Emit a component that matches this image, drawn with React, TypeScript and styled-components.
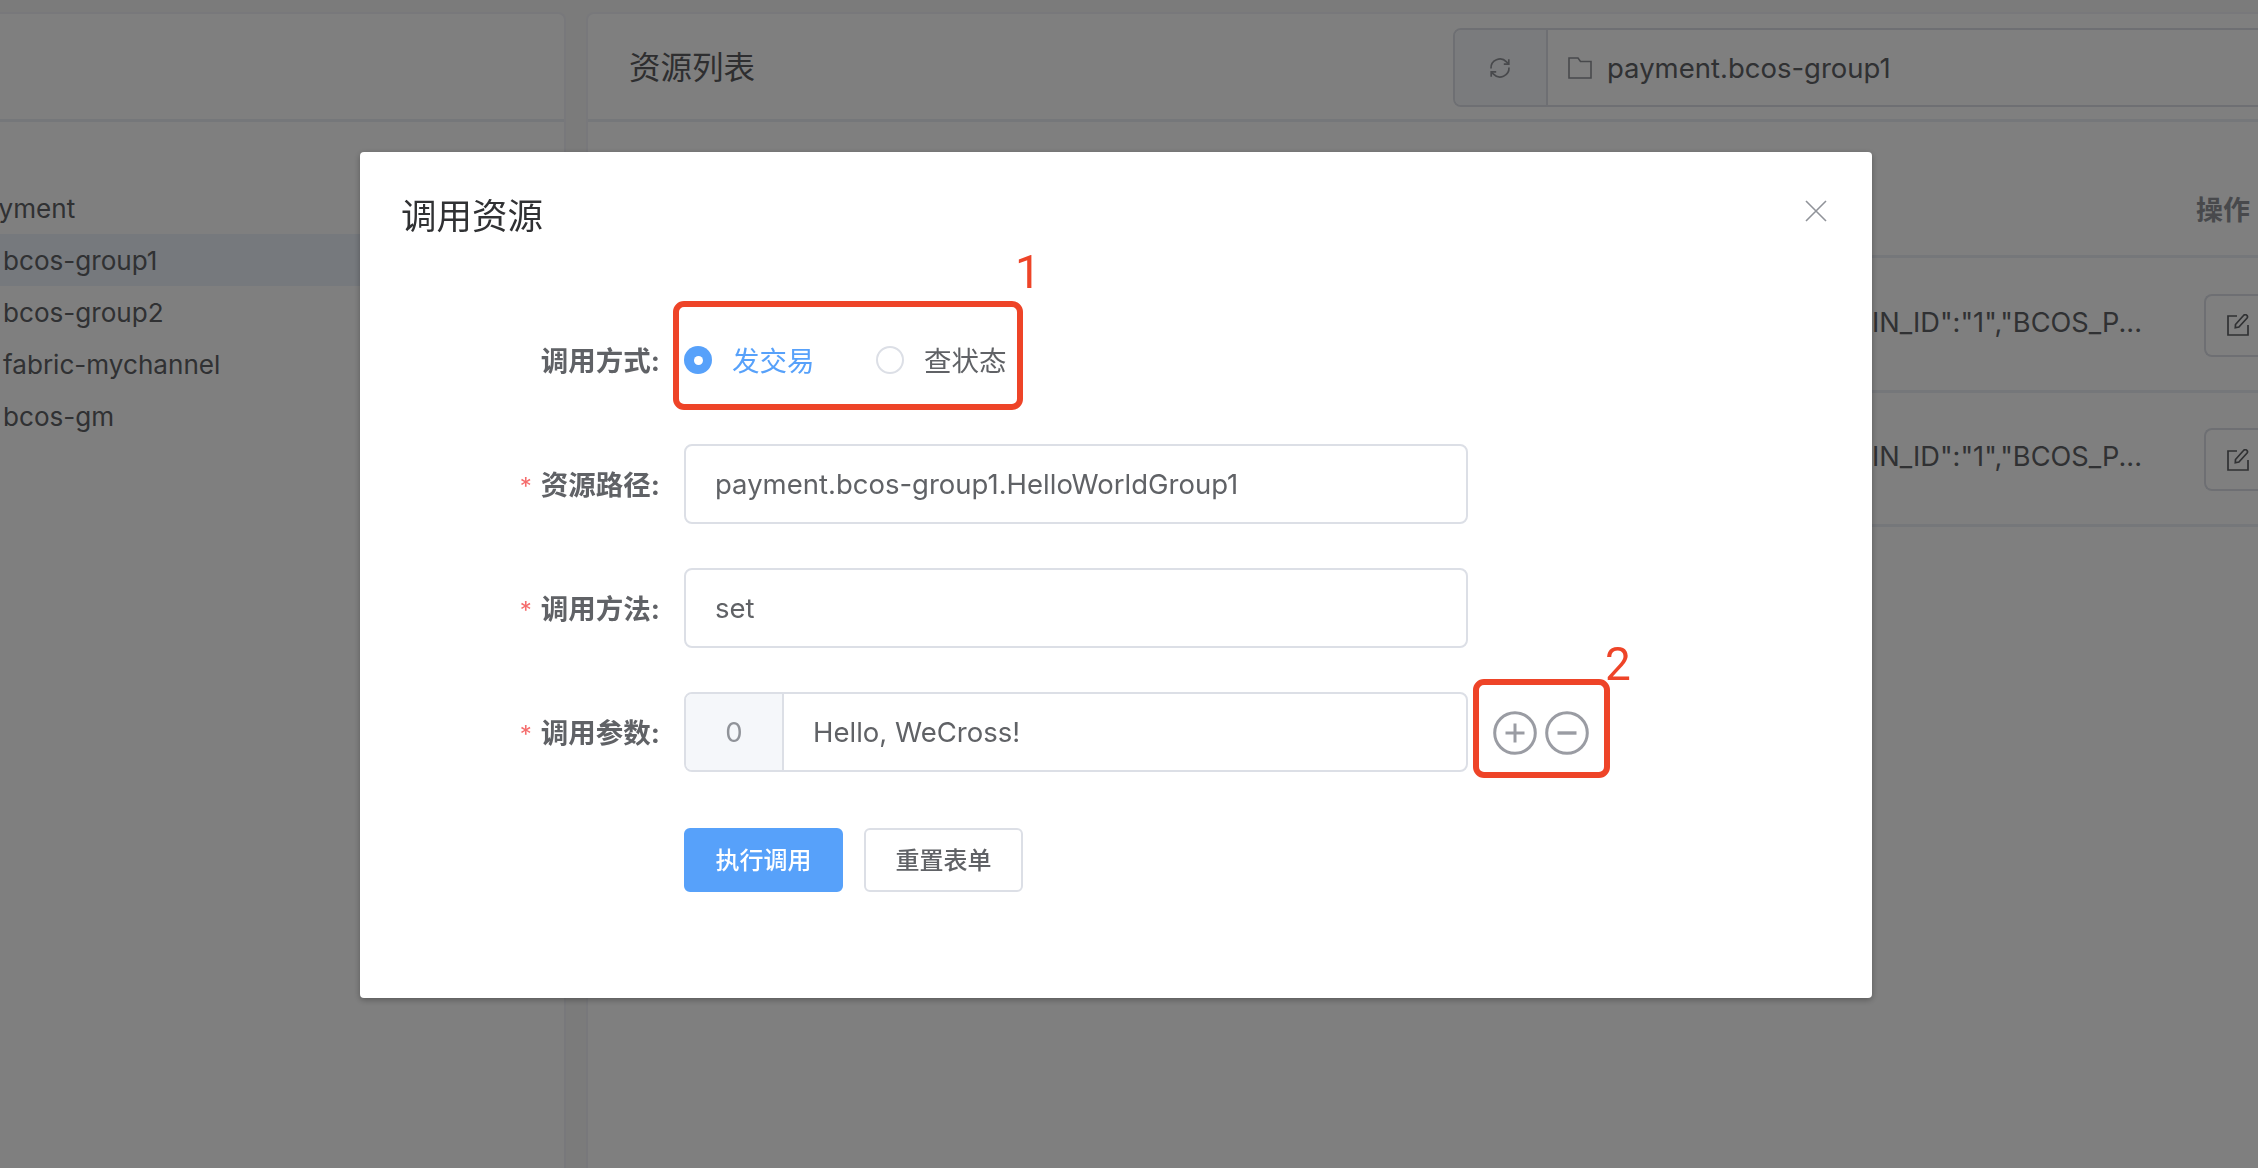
import React from "react";
import styled, { createGlobalStyle } from "styled-components";

const Global = createGlobalStyle`
  html, body { margin: 0; padding: 0; width: 2258px; height: 1168px; overflow: hidden; background: #f6f6f6; }
  body { font-family: Inter, "Noto Sans CJK SC", sans-serif; color: #606266; }
  * { box-sizing: border-box; }
`;

const Page = styled.div`
  width: 2258px; height: 1168px; overflow: hidden;
  display: grid; grid-template-columns: 566px 1701px; column-gap: 20px;
  padding-top: 12px;
`;
const Panel = styled.section`
  background: #fff; border: solid #f0f1f6; border-width: 2px 2px 0 2px; border-radius: 8px 8px 0 0;
  height: 1156px;
`;
const LeftPanel = styled(Panel)`
  border-left: 0; border-radius: 0 8px 0 0;
`;
const PanelHead = styled.header`
  height: 108px; border-bottom: 3px solid #ebeef5;
  display: flex; align-items: center;
`;
const TreeList = styled.ul`
  list-style: none; margin: 0; padding: 60px 0 0 0;
`;
const TreeRow = styled.li<{ $active?: boolean; $root?: boolean }>`
  height: 52px; display: flex; align-items: center;
  padding-left: 3px; overflow: hidden; white-space: nowrap;
  font-size: 26.1px; color: #606266;
  background: ${p => (p.$active ? "#ecf2fa" : "transparent")};
  ${p => (p.$root ? "text-indent: -35px;" : "")}
`;
const ListTitle = styled.h2`
  margin: -4px 0 0 41px; font-size: 31.5px; font-weight: 400; color: #5c5d60; flex: 0 0 auto;
`;
const PathGroup = styled.div`
  margin-left: 698px; margin-top: 2px; width: 900px; height: 79px;
  display: flex; border: 2px solid #dcdfe6; border-radius: 8px; overflow: hidden;
`;
const RefreshCell = styled.div`
  width: 93px; background: #f5f7fa; border-right: 2px solid #dcdfe6;
  display: flex; align-items: center; justify-content: center; color: #909399; padding-right: 2px;
`;
const PathCell = styled.div`
  flex: 1; display: flex; align-items: center; padding-left: 20px; gap: 15px;
  font-size: 27.5px; color: #606266;
`;
const TableHead = styled.div`
  display: grid; grid-template-columns: 1fr 81px; height: 136px;
  border-bottom: 3px solid #ebeef5; align-items: center;
`;
const OpTitle = styled.div`
  font-weight: 700; font-size: 27px; color: #909399; margin-left: -8px; white-space: nowrap; padding-top: 40px;
`;
const TableRow = styled.div`
  display: grid; grid-template-columns: 1fr 81px; height: 134.5px;
  border-bottom: 3px solid #ebeef5; align-items: center;
`;
const CellText = styled.div`
  text-align: right; padding-right: 62px; font-size: 27.2px; color: #606266; white-space: nowrap; margin-top: -3px;
`;
const EditBtn = styled.div`
  width: 81px; height: 63px; border: 2px solid #dcdfe6; border-right: 0; border-radius: 8px 0 0 8px;
  display: flex; align-items: center; padding-left: 21px; color: #606266; margin-top: 3px;
`;

const Overlay = styled.div`
  position: fixed; inset: 0; background: rgba(0,0,0,.5);
  padding: 152px 0 0 360px;
`;
const Modal = styled.div`
  position: relative; width: 1512px; height: 846px; background: #fff; border-radius: 4px;
  box-shadow: 0 2px 6px rgba(0,0,0,.3); padding-top: 42px;
`;
const ModalTitle = styled.h1`
  margin: 0 0 0 41px; height: 44px; line-height: 46px; font-size: 35.5px; font-weight: 400; color: #303133;
`;
const CloseBtn = styled.button`
  position: absolute; right: 44px; top: 47px; width: 24px; height: 24px; padding: 0; border: 0; background: none; color: #909399;
  display: flex;
`;
const Form = styled.form`
  margin-top: 82px; display: flex; flex-direction: column; gap: 44px;
`;
const Row = styled.div`
  display: grid; grid-template-columns: 300px 784px; column-gap: 24px; height: 80px; align-items: center;
`;
const Label = styled.label`
  text-align: right; font-size: 27.5px; font-weight: 700; color: #606266; white-space: nowrap; margin-top: -2px;
`;
const Star = styled.span`
  color: #f56c6c; font-weight: 400; margin-right: 9px; font-size: 24px;
`;
const RadioGroup = styled.div`
  display: flex; align-items: center; height: 80px;
`;
const RadioItem = styled.div<{ $on?: boolean }>`
  display: flex; align-items: center; gap: 20px; width: 192px; font-size: 27.5px;
  color: ${p => (p.$on ? "#57a1fa" : "#606266")};
`;
const RadioText = styled.span`
  margin-top: -2px;
`;
const RadioDot = styled.span<{ $on?: boolean }>`
  width: 28px; height: 28px; border-radius: 50%; flex: none;
  ${p => (p.$on
    ? "background: #57a1fa; display:flex; align-items:center; justify-content:center; &::after{content:''; width:9px; height:9px; border-radius:50%; background:#fff;}"
    : "border: 2px solid #dcdfe6; background:#fff;")}
`;
const TextBox = styled.div`
  height: 80px; border: 2px solid #dcdfe6; border-radius: 8px; display: flex; align-items: center;
  padding-left: 29px; font-size: 27.5px; color: #606266; white-space: nowrap; overflow: hidden;
`;
const ParamRow = styled.div`
  position: relative; height: 80px; border: 2px solid #dcdfe6; border-radius: 8px; display: flex;
  font-size: 27.5px; color: #606266;
`;
const IndexCell = styled.div`
  width: 98px; background: #f5f7fa; border-right: 2px solid #dcdfe6; border-radius: 6px 0 0 6px;
  display: flex; align-items: center; justify-content: center; color: #909399;
`;
const ValueCell = styled.div`
  flex: 1; display: flex; align-items: center; padding-left: 29px;
`;
const RoundActions = styled.div`
  position: absolute; left: 807px; top: 17px; display: flex; gap: 8px; color: #9a9ca3;
`;
const Actions = styled.div`
  margin: 12px 0 0 324px; display: flex; gap: 21px;
`;
const Btn = styled.button<{ $primary?: boolean }>`
  width: 159px; height: 64px; border-radius: 6px; font: 500 24px Inter, "Noto Sans CJK SC", sans-serif;
  border: 2px solid ${p => (p.$primary ? "#57a1fa" : "#dcdfe6")};
  background: ${p => (p.$primary ? "#57a1fa" : "#fff")};
  color: ${p => (p.$primary ? "#fff" : "#606266")};
  padding: 0 0 3px;
`;
const Callout = styled.div<{ $l: number; $t: number; $w: number; $h: number }>`
  position: absolute; left: ${p => p.$l}px; top: ${p => p.$t}px; width: ${p => p.$w}px; height: ${p => p.$h}px;
  border: 6px solid #ee4428; border-radius: 11px;
`;
const CalloutNum = styled.span<{ $l: number; $t: number }>`
  position: absolute; left: ${p => p.$l}px; top: ${p => p.$t}px; font: 400 46px/46px Roboto, "Liberation Sans", sans-serif; color: #ee4428;
`;

const RefreshIcon = () => (
  <svg width="24" height="24" viewBox="0 0 24 24" fill="none" stroke="currentColor" strokeWidth="1.7">
    <path d="M3 12.5a9 9 0 0 1 15.5-6.6l2 2" />
    <path d="M21 11.5a9 9 0 0 1-15.5 6.6l-2-2" />
    <path d="M20.8 3.2v5h-5" />
    <path d="M3.2 20.8v-5h5" />
  </svg>
);
const FolderIcon = () => (
  <svg width="24" height="22" viewBox="0 0 24 22" fill="none" stroke="#909399" strokeWidth="1.6">
    <path d="M1 1h9l2.5 3.5H23V21H1z" />
  </svg>
);
const EditIcon = () => (
  <svg width="22" height="22" viewBox="0 0 22 22" fill="none" stroke="currentColor" strokeWidth="1.7">
    <path d="M10 2H1v19h20v-10" />
    <path d="M8.5 10.5 16.5 1.5a1.9 1.9 0 0 1 3.4 2.8l-8 8.7-3.6.8z" />
  </svg>
);
const CloseIcon = () => (
  <svg width="24" height="24" viewBox="0 0 24 24" stroke="currentColor" strokeWidth="1.6">
    <path d="M2 2l20 20M22 2L2 22" />
  </svg>
);
const Round = ({ plus }: { plus?: boolean }) => (
  <svg width="44" height="44" viewBox="0 0 44 44" fill="none" stroke="currentColor">
    <circle cx="22" cy="22" r="20.3" strokeWidth="3" />
    <path d="M12.5 22h19" strokeWidth={plus ? 3 : 3.4} />
    {plus && <path d="M22 12.5v19" strokeWidth="3" />}
  </svg>
);

export default function App() {
  return (
    <>
      <Global />
      <Page>
        <LeftPanel>
          <PanelHead />
          <TreeList>
            <TreeRow $root>payment</TreeRow>
            <TreeRow $active>bcos-group1</TreeRow>
            <TreeRow>bcos-group2</TreeRow>
            <TreeRow>fabric-mychannel</TreeRow>
            <TreeRow>bcos-gm</TreeRow>
          </TreeList>
        </LeftPanel>
        <Panel>
          <PanelHead>
            <ListTitle>资源列表</ListTitle>
            <PathGroup>
              <RefreshCell><RefreshIcon /></RefreshCell>
              <PathCell><FolderIcon />payment.bcos-group1</PathCell>
            </PathGroup>
          </PanelHead>
          <TableHead><div /><OpTitle>操作</OpTitle></TableHead>
          <TableRow>
            <CellText>{'{"BCOS_CHAIN_ID":"1","BCOS_P...'}</CellText>
            <EditBtn><EditIcon /></EditBtn>
          </TableRow>
          <TableRow>
            <CellText>{'{"BCOS_CHAIN_ID":"1","BCOS_P...'}</CellText>
            <EditBtn><EditIcon /></EditBtn>
          </TableRow>
        </Panel>
      </Page>
      <Overlay>
        <Modal>
          <ModalTitle>调用资源</ModalTitle>
          <CloseBtn type="button"><CloseIcon /></CloseBtn>
          <Form>
            <Row>
              <Label>调用方式:</Label>
              <RadioGroup>
                <RadioItem $on><RadioDot $on /><RadioText>发交易</RadioText></RadioItem>
                <RadioItem><RadioDot /><RadioText>查状态</RadioText></RadioItem>
              </RadioGroup>
            </Row>
            <Row>
              <Label><Star>*</Star>资源路径:</Label>
              <TextBox>payment.bcos-group1.HelloWorldGroup1</TextBox>
            </Row>
            <Row>
              <Label><Star>*</Star>调用方法:</Label>
              <TextBox>set</TextBox>
            </Row>
            <Row>
              <Label><Star>*</Star>调用参数:</Label>
              <ParamRow>
                <IndexCell>0</IndexCell>
                <ValueCell>Hello, WeCross!</ValueCell>
                <RoundActions><Round plus /><Round /></RoundActions>
              </ParamRow>
            </Row>
            <Actions>
              <Btn type="button" $primary>执行调用</Btn>
              <Btn type="button">重置表单</Btn>
            </Actions>
          </Form>
          <Callout $l={313} $t={149} $w={350} $h={109} />
          <CalloutNum $l={655} $t={97}>1</CalloutNum>
          <Callout $l={1113} $t={527} $w={137} $h={99} />
          <CalloutNum $l={1245} $t={489}>2</CalloutNum>
        </Modal>
      </Overlay>
    </>
  );
}
